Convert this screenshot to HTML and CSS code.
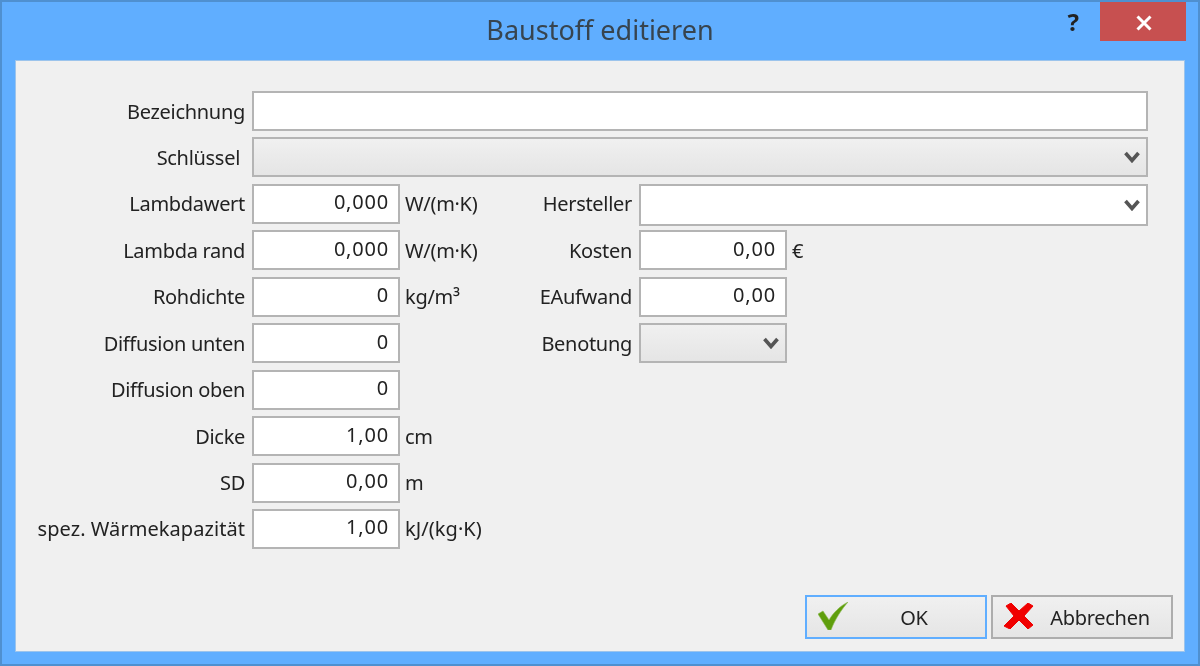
FILE: index.html
```html
<!DOCTYPE html>
<html lang="de">
<head>
<meta charset="utf-8">
<title>Baustoff editieren</title>
<link rel="stylesheet" href="styles.css">
</head>
<body>
<div class="window">
  <header class="titlebar">
    <h1 class="title">Baustoff editieren</h1>
    <span class="help">?</span>
    <div class="close">
      <svg width="16" height="16" viewBox="0 0 16 16"><path d="M1.500 1.500 14.500 14.500M14.500 1.500 1.500 14.500" stroke="#fff" stroke-width="3" fill="none"/></svg>
    </div>
  </header>
  <main class="content">
    <div class="form">
      <div class="label">Bezeichnung</div>
      <div class="field span-all"></div>

      <div class="label label-inset">Schlüssel</div>
      <div class="combo span-all">
        <svg class="chevron" viewBox="0 0 16 12"><path d="M1.500 2 8 9.500 14.500 2" stroke="#555" stroke-width="3.600" fill="none"/></svg>
      </div>

      <div class="label">Lambdawert</div>
      <div class="field num">0,000</div>
      <div class="unit">W/(m·K)</div>
      <div class="label">Hersteller</div>
      <div class="field tall span-rest">
        <svg class="chevron" viewBox="0 0 16 12"><path d="M1.500 2 8 9.500 14.500 2" stroke="#555" stroke-width="3.600" fill="none"/></svg>
      </div>

      <div class="label">Lambda rand</div>
      <div class="field num">0,000</div>
      <div class="unit">W/(m·K)</div>
      <div class="label">Kosten</div>
      <div class="field num">0,00</div>
      <div class="unit">€</div>

      <div class="label">Rohdichte</div>
      <div class="field num">0</div>
      <div class="unit">kg/m³</div>
      <div class="label">EAufwand</div>
      <div class="field num">0,00</div>
      <div class="unit"></div>

      <div class="label">Diffusion unten</div>
      <div class="field num">0</div>
      <div class="unit"></div>
      <div class="label">Benotung</div>
      <div class="combo">
        <svg class="chevron" viewBox="0 0 16 12"><path d="M1.500 2 8 9.500 14.500 2" stroke="#555" stroke-width="3.600" fill="none"/></svg>
      </div>
      <div class="unit"></div>

      <div class="label">Diffusion oben</div>
      <div class="field num">0</div>
      <div class="unit span-tail"></div>

      <div class="label">Dicke</div>
      <div class="field num">1,00</div>
      <div class="unit span-tail">cm</div>

      <div class="label">SD</div>
      <div class="field num">0,00</div>
      <div class="unit span-tail">m</div>

      <div class="label label-wide">spez. Wärmekapazität</div>
      <div class="field num">1,00</div>
      <div class="unit span-tail label-wide">kJ/(kg·K)</div>
    </div>
    <footer class="actions">
      <div class="button default">
        <svg class="btn-icon" width="30" height="28" viewBox="0 0 30 28"><path d="M0 12 5 9 11 18C15 11 22 4 30 0 24 7 17 17 13 28L10 28Z" fill="#5f9e0c" stroke="#8cba50" stroke-width=".6"/></svg>
        <span class="btn-text">OK</span>
      </div>
      <div class="button">
        <svg class="btn-icon cancel" width="30" height="26" viewBox="0 0 30 26"><path d="M2 3 7 0 15 8 24 0 29 3 20 13 29 22 24 26 15 17 6 26 0 23 10 13Z" fill="#f00000" stroke="#f00000" stroke-linejoin="round"/></svg>
        <span class="btn-text">Abbrechen</span>
      </div>
    </footer>
  </main>
</div>
</body>
</html>
```
FILE: styles.css
```css
* { box-sizing: border-box; }
html, body { margin: 0; padding: 0; }
body {
  width: 1200px;
  height: 666px;
  overflow: hidden;
  font-family: "Noto Sans", "Liberation Sans", sans-serif;
  color: #222;
}
.window {
  width: 1200px;
  height: 666px;
  display: flex;
  flex-direction: column;
  background: #60aeff;
  border: 2px solid #4f90d0;
  padding: 0 13px 12px;
  filter: blur(0.45px);
}
.titlebar {
  height: 58px;
  flex: none;
  display: flex;
  align-items: flex-start;
  justify-content: flex-end;
  position: relative;
}
.title {
  position: absolute;
  left: 0;
  right: 0;
  top: 8px;
  margin: 0;
  text-align: center;
  font-size: 27px;
  line-height: 40px;
  font-weight: 400;
  color: #37444f;
}
.help {
  font-size: 24px;
  line-height: 40px;
  font-weight: 700;
  color: #222;
  margin-right: 21px;
}
.close {
  width: 86px;
  height: 39px;
  margin-right: -1px;
  padding: 2px 0 0 1px;
  background: #c75050;
  display: flex;
  align-items: center;
  justify-content: center;
}
.content {
  flex: 1;
  display: flex;
  flex-direction: column;
  background: #f0f0f0;
  border: 1px solid #9cc4ec;
  padding: 30px 11px 12px 0;
}
.form {
  display: grid;
  grid-template-columns: 236px 148px 90px 149px 148px 361px;
  grid-auto-rows: 40px;
  row-gap: 6.44px;
  font-size: 20px;
  letter-spacing: -0.3px;
}
.label {
  display: flex;
  align-items: center;
  justify-content: flex-end;
  padding-right: 7px;
  white-space: nowrap;
}
.label-inset { padding-right: 12px; }
.label-wide { letter-spacing: 0.06px; }
.unit {
  display: flex;
  align-items: center;
  padding-left: 5px;
  white-space: nowrap;
}
.span-tail { grid-column: 3 / -1; }
.span-all { grid-column: 2 / -1; }
.span-rest { grid-column: 5 / -1; }
.field, .combo {
  position: relative;
  display: flex;
  align-items: center;
  justify-content: flex-end;
  border: 2px solid #b4b4b4;
}
.field { background: #fff; }
.combo { background: linear-gradient(#f0f0f0, #e5e5e5); }
.num {
  padding: 0 9px 4px 0;
  letter-spacing: 0.8px;
}
.tall { height: 42px; }
.chevron {
  width: 16px;
  height: 12px;
  margin-right: 6px;
}
.actions {
  margin-top: auto;
  display: flex;
  justify-content: flex-end;
  gap: 4px;
}
.button {
  width: 182px;
  height: 44px;
  display: flex;
  align-items: center;
  position: relative;
  border: 2px solid #adadad;
  background: linear-gradient(#f0f0f0, #e5e5e5);
  font-size: 20px;
  letter-spacing: -0.3px;
}
.button.default { border-color: #60aeff; }
.btn-icon {
  position: absolute;
  left: 11px;
  top: 5px;
}
.btn-icon.cancel { top: 6px; }
.btn-text {
  width: 100%;
  text-align: center;
  padding-left: 36px;
}
```
